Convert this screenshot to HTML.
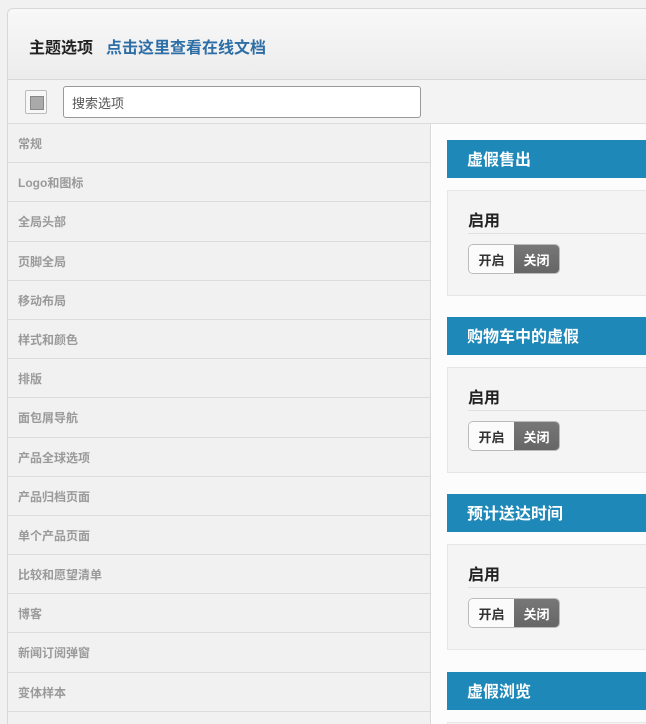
<!DOCTYPE html>
<html><head><meta charset="utf-8"><style>
*{box-sizing:border-box;margin:0;padding:0}
html,body{width:646px;height:724px;overflow:hidden}
body{background:#f1f1f1;font-family:"Liberation Sans","Noto Sans CJK SC",sans-serif;position:relative}
.panel{position:absolute;left:7px;top:8px;width:639px;height:716px;border:1px solid #d8d8d8;border-right:none;border-bottom:none;border-radius:6px 0 0 0;background:#fff;overflow:hidden}
.hdr{height:71px;background:linear-gradient(#f8f8f8,#ececec);border-bottom:1px solid #d6d6d6;padding:25px 0 0 21px;font-size:16px;font-weight:bold;color:#222}
.hdr a{color:#2e6ea6;margin-left:13px;text-decoration:none}
.bar{height:44px;background:#f3f3f3;border-bottom:1px solid #dcdcdc;position:relative}
.ico{position:absolute;left:17px;top:10px;width:22px;height:24px;border:1px solid #bbb;border-radius:2px;background:#f7f7f7}
.ico:after{content:"";position:absolute;left:4px;top:5px;width:12px;height:12px;background:#aaa;border:1px solid #888}
.search{position:absolute;left:55px;top:6px;width:358px;height:32px;border:1px solid #999;border-radius:3px;background:#fff;font-size:13px;color:#555;padding:6px 8px}
.side{position:absolute;left:0;top:115px;width:423px;height:640px;background:#f1f1f1;border-right:1px solid #d8d8d8}
.side div{height:39.2px;border-bottom:1px solid #dcdcdc;font-size:12px;font-weight:bold;color:#9a9a9a;padding:11px 0 0 10px}
.main{position:absolute;left:424px;top:115px;right:0;bottom:0;background:#fcfcfc}
.sec{position:absolute;left:15px;right:0}
.blue{height:38px;background:#1e88b8;color:#fff;font-size:16px;font-weight:bold;padding:6px 0 0 20px}
.box{margin-top:12px;height:106px;background:#f4f4f4;border:1px solid #e6e6e6;border-right:none;padding:16px 0 0 20px}
.lab{font-size:16px;font-weight:bold;color:#222;border-bottom:1px solid #e0e0e0;height:27px}
.sw{margin-top:10px;display:flex;width:92px;height:30px;border:1px solid #bbb;border-radius:5px;overflow:hidden;font-size:13px;font-weight:bold}
.sw span{flex:1;text-align:center;padding-top:5px}
.on{background:#fbfbfb;color:#333}
.off{background:linear-gradient(#777,#666);color:#fff}
</style></head><body>
<div class="panel">
<div class="hdr">主题选项<a>点击这里查看在线文档</a></div>
<div class="bar"><div class="ico"></div><div class="search">搜索选项</div></div>
<div class="side">
<div>常规</div><div>Logo和图标</div><div>全局头部</div><div>页脚全局</div><div>移动布局</div><div>样式和颜色</div><div>排版</div><div>面包屑导航</div><div>产品全球选项</div><div>产品归档页面</div><div>单个产品页面</div><div>比较和愿望清单</div><div>博客</div><div>新闻订阅弹窗</div><div>变体样本</div><div></div>
</div>
<div class="main">
<div class="sec" style="top:16px"><div class="blue">虚假售出</div><div class="box"><div class="lab">启用</div><div class="sw"><span class="on">开启</span><span class="off">关闭</span></div></div></div>
<div class="sec" style="top:193px"><div class="blue">购物车中的虚假</div><div class="box"><div class="lab">启用</div><div class="sw"><span class="on">开启</span><span class="off">关闭</span></div></div></div>
<div class="sec" style="top:370px"><div class="blue">预计送达时间</div><div class="box"><div class="lab">启用</div><div class="sw"><span class="on">开启</span><span class="off">关闭</span></div></div></div>
<div class="sec" style="top:548px"><div class="blue">虚假浏览</div><div class="box"></div></div>
</div>
</div>
</body></html>
